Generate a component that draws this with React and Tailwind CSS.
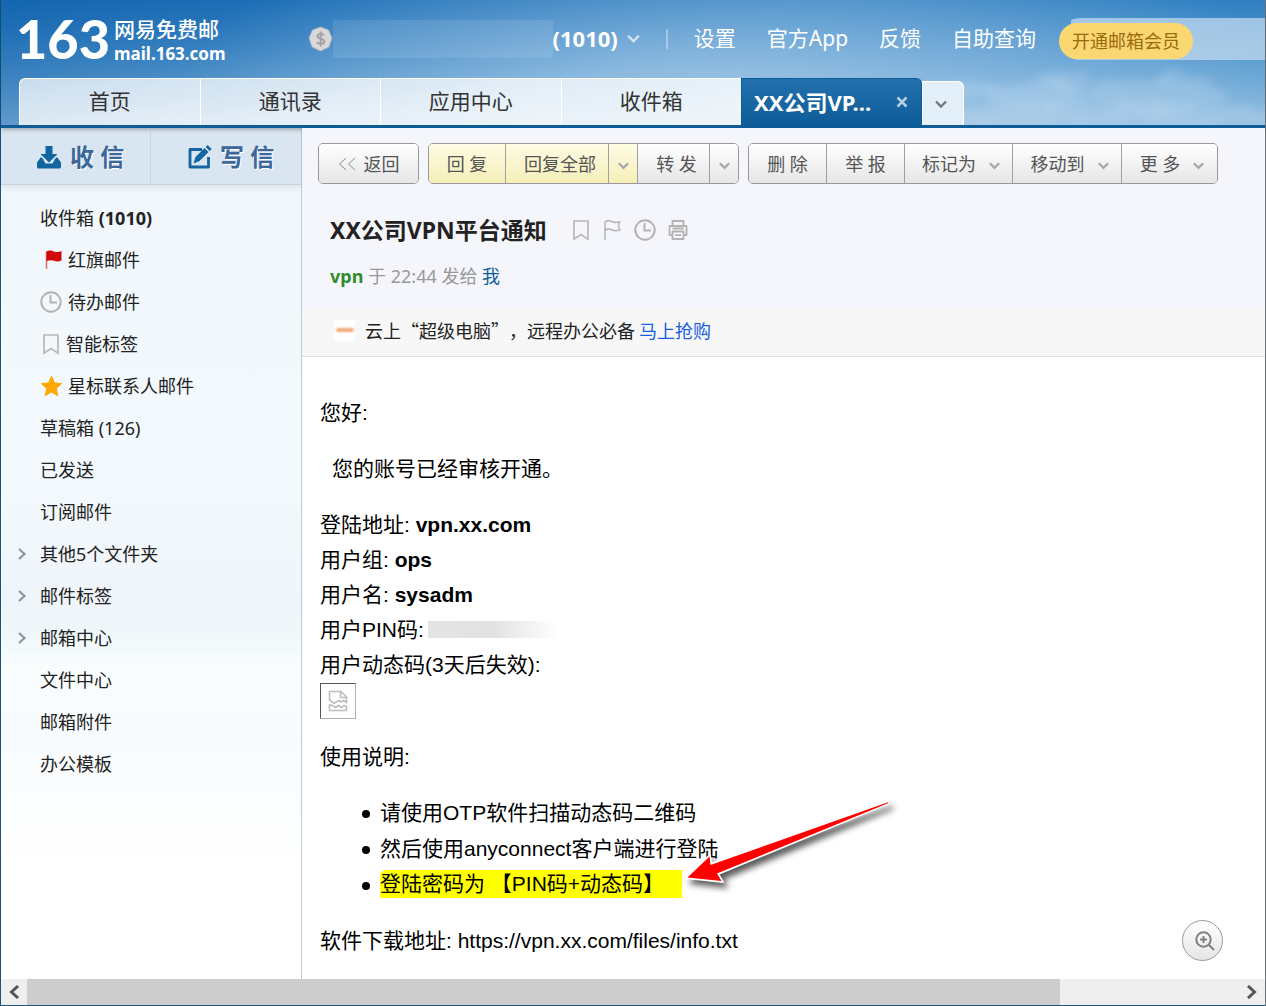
import React from "react";

const UI = "font-['Noto_Sans','Noto_Sans_CJK_SC',sans-serif]";

function Chevron({ className = "", w = 14, stroke = 2.4 }) {
  return (
    <svg width={w} height={w} viewBox="0 0 14 14" fill="none" stroke="currentColor" strokeWidth={stroke} className={className} aria-hidden="true">
      <path d="M2 4.5 7 9.5 12 4.5" />
    </svg>
  );
}

function ClockIcon() {
  return (
    <svg width="22" height="22" viewBox="0 0 22 22" fill="none" stroke="#b3b3b3" strokeWidth="2" aria-hidden="true">
      <circle cx="11" cy="11" r="9.7" />
      <path d="M10.5 4v7.5H17" />
    </svg>
  );
}

function BookmarkIcon() {
  return (
    <svg width="18" height="22" viewBox="0 0 18 22" fill="none" stroke="#b8b8b8" strokeWidth="1.7" aria-hidden="true">
      <path d="M2 2h14v18.2l-7-4.6-7 4.6z" />
    </svg>
  );
}

function FlagOutline() {
  return (
    <svg width="20" height="22" viewBox="0 0 20 22" fill="none" stroke="#b8b8b8" strokeWidth="1.6" strokeLinejoin="round" aria-hidden="true">
      <path d="M3 21V3.500C4.500 1.300 7.500 1.500 9.500 2.500s4.500 1.300 8.500.2c-1.500 2-1.500 3-1.500 4.200s.2 2.300 1.500 4.100c-3.500 1-6.500.8-8.500-.2S4.500 9.500 3 11.800" />
    </svg>
  );
}

function PrinterIcon() {
  return (
    <svg width="20" height="22" viewBox="0 0 20 22" fill="none" stroke="#b3b3b3" strokeWidth="1.8" strokeLinejoin="round" aria-hidden="true">
      <path d="M4.500 6.500V2h11v4.500M4.500 16H1.500V7h17v9h-3M4.500 12.500h11V20h-11zM4.500 9.500h11M7 16.200h6" />
    </svg>
  );
}

function RedFlag() {
  return (
    <svg width="24" height="22" viewBox="0 0 24 22" aria-hidden="true">
      <path d="M6.500 3v17" stroke="#e36a6a" strokeWidth="1.500" />
      <path d="M6.500 2.200c3-1.500 5.500-.5 7.500.2s4.500.8 7.500-.3v9.500c-3 1.200-5.500 1-7.500.2s-4.500-1-7.500.4z" fill="#d00a0a" />
    </svg>
  );
}

function StarIcon() {
  return (
    <svg width="23" height="22" viewBox="0 0 23 22" aria-hidden="true">
      <path d="M11.500 1.200l2.900 6.700 7.300.7-5.500 4.900 1.600 7.200-6.300-3.800-6.300 3.800 1.600-7.200-5.500-4.900 7.300-.7z" fill="#ffa800" stroke="#ffa800" strokeLinejoin="round" />
    </svg>
  );
}

function Logo() {
  return (
    <a href="#home" className="flex items-center gap-1 text-white">
      <span className="font-['Lato',sans-serif] text-[54px] leading-[54px] font-black">163</span>
      <span className="flex flex-col gap-0.5 pt-1">
        <span className="font-['Noto_Sans_CJK_SC',sans-serif] text-[21px] leading-6 font-medium">网易免费邮</span>
        <span className="text-[17px] leading-6 font-bold">mail.163.com</span>
      </span>
    </a>
  );
}

function Clouds() {
  return (
    <svg className="absolute right-0 bottom-0 h-[70px] w-[345px]" viewBox="0 0 345 70" preserveAspectRatio="none" aria-hidden="true">
      <defs>
        <filter id="soft" x="-20%" y="-50%" width="140%" height="200%">
          <feTurbulence type="fractalNoise" baseFrequency="0.03 0.06" numOctaves="4" seed="8" result="n" />
          <feDisplacementMap in="SourceGraphic" in2="n" scale="26" />
          <feGaussianBlur stdDeviation="4" />
        </filter>
      </defs>
      <g fill="#d5e8f7" filter="url(#soft)">
        <ellipse cx="45" cy="34" rx="34" ry="10" opacity=".22" />
        <ellipse cx="115" cy="40" rx="50" ry="14" opacity=".25" />
        <ellipse cx="150" cy="26" rx="24" ry="9" opacity=".2" />
        <ellipse cx="235" cy="40" rx="70" ry="15" opacity=".22" />
        <ellipse cx="265" cy="26" rx="26" ry="7" opacity=".2" />
        <ellipse cx="180" cy="62" rx="200" ry="14" opacity=".22" />
      </g>
    </svg>
  );
}

const topLinks = ["设置", "官方App", "反馈", "自助查询"];
const tabs = ["首页", "通讯录", "应用中心", "收件箱"];

function Header() {
  return (
    <header className="relative border-b-[3px] border-[#0d5c98] bg-[radial-gradient(ellipse_560px_190px_at_735px_95px,rgba(190,215,238,0.55),rgba(190,215,238,0)),linear-gradient(160deg,rgba(0,84,164,0.6),rgba(0,84,164,0)_50%),linear-gradient(to_bottom,#2f7fc2,#5e9fd2_50%,#93bfe1)] shadow-[0_2px_4px_rgba(0,0,0,0.25)]">
      <Clouds />
      <div className="relative flex h-[78px] items-center pl-[15px] text-[21px] text-white">
        <Logo />
        <svg width="25" height="26" viewBox="0 0 25 26" className="ml-[82px] shrink-0" aria-hidden="true">
          <path d="M12.500 1l8 3 3.500 8-3 9-8.500 4-8.500-4-3-9L4.500 4z" fill="#d9d9d9" stroke="#a9b3bb" />
          <path d="M16 9.500c-.8-2-6.500-2.200-6.500.8 0 3 6.800 2 6.800 5.200 0 3-6 3-7.300.5M12.700 5.500v15" fill="none" stroke="#a3a3a3" strokeWidth="2" />
        </svg>
        <span className="h-[38px] w-[220px] bg-white/10" />
        <button className="flex items-center gap-2 pb-0.5 text-[22px] font-bold">
          (1010)
          <Chevron className="text-white/75" w={15} stroke={2} />
        </button>
        <span className="ml-[25px] h-5 w-0.5 bg-white/35" />
        <nav className="ml-[26px] flex gap-[31px]">
          {topLinks.map((t) => (
            <a key={t} href="#top" className="whitespace-nowrap">{t}</a>
          ))}
        </nav>
        <div className="ml-[23px] flex h-[42px] flex-1 items-center rounded-l-full bg-[linear-gradient(to_right,transparent_12px,rgba(200,221,240,0.7)_12px)] pt-1">
          <button className="flex h-9 items-center rounded-full bg-[#fbd771] px-[13px] text-lg whitespace-nowrap text-[#9a6a10]">开通邮箱会员</button>
        </div>
      </div>
      <nav className="relative flex items-end pl-[18px] text-[21px] text-[#333]">
        <div className="grid w-[722px] grid-cols-4">
          {tabs.map((t, i) => (
            <button key={t} className={"h-[47px] border-t border-l border-white bg-[linear-gradient(170deg,rgba(255,255,255,0.72),rgba(255,255,255,0.82))] " + (i === 0 ? "rounded-tl-md" : "")}>
              {t}
            </button>
          ))}
        </div>
        <div className="flex h-[47px] w-[181px] items-center justify-between rounded-tr-md border border-b-0 border-[#0d5c98] bg-linear-to-b from-[#2370ac] to-[#0d5c98] px-3 text-[22px] font-bold text-white">
          <span>XX公司VP...</span>
          <button aria-label="关闭">
            <svg width="14" height="14" viewBox="0 0 14 14" stroke="#b5d0e6" strokeWidth="2.500" aria-hidden="true">
              <path d="M2.500 2.500l9 9M11.500 2.500l-9 9" />
            </svg>
          </button>
        </div>
        <button aria-label="更多标签" className="flex h-11 w-[42px] items-center justify-center rounded-tr-md border border-b-0 border-white bg-[#e4f0f9] pr-1 text-[#777]">
          <Chevron />
        </button>
      </nav>
    </header>
  );
}

const folders = [
  { t: "收件箱", n: "(1010)", bold: true },
  { t: "红旗邮件", icon: <RedFlag />, gap: "gap-1" },
  { t: "待办邮件", icon: <ClockIcon />, gap: "gap-1.5" },
  { t: "智能标签", icon: <BookmarkIcon />, gap: "gap-1.5 pl-0.5" },
  { t: "星标联系人邮件", icon: <StarIcon />, gap: "gap-[5px]" },
  { t: "草稿箱", n: "(126)" },
  { t: "已发送" },
  { t: "订阅邮件" },
  { t: "其他5个文件夹", arrow: true },
  { t: "邮件标签", arrow: true },
  { t: "邮箱中心", arrow: true },
  { t: "文件中心" },
  { t: "邮箱附件" },
  { t: "办公模板" },
];

function Sidebar() {
  return (
    <aside className="w-[301px] shrink-0 border-r border-[#bccdd8] bg-[linear-gradient(to_bottom,#f0f6fb,#f4f9fd_350px,#eff5fa_470px,#eff7fa_505px,#fafdfe_540px,#f8fbfd_610px,#ffffff_740px)]">
      <div className="grid h-[57px] grid-cols-2 border-b border-[#c3d3df] bg-[#d9e6f1] pt-0.5 text-2xl font-bold text-[#3b679a] shadow-[0_2px_8px_rgba(0,0,0,0.1)]">
        <button className="flex items-center gap-2 border-r border-[#c5d6e4] pl-[35px] [text-shadow:1px_1px_0_white]">
          <svg width="26" height="25" viewBox="0 0 26 25" fill="#1265a0" aria-hidden="true">
            <path d="M9.500 1h7v8h5L13 17.500 4.500 9h5z" />
            <path d="M5 12l3 3H7.500l2 3.500h7l2-3.500H18l3-3 4 5.500V22a1.500 1.500 0 0 1-1.500 1.500h-21A1.500 1.500 0 0 1 1 22v-4.500z" />
          </svg>
          收 信
        </button>
        <button className="flex items-center gap-2 pl-9 [text-shadow:1px_1px_0_white]">
          <svg width="25" height="25" viewBox="0 0 25 25" aria-hidden="true">
            <path d="M15 4.500H3V22h18.500V12" fill="none" stroke="#1265a0" strokeWidth="2.800" strokeLinejoin="round" />
            <path d="M6.500 18.500l2-6.500L17.500 3l4 4-9 9z" fill="#1265a0" />
            <path d="M18.700 1.900L20.600 0l4 4-1.900 1.900z" fill="#1265a0" />
          </svg>
          写 信
        </button>
      </div>
      <nav className="pt-3 text-lg leading-[42px] text-[#222]">
        <ul>
          {folders.map((f) => (
            <li key={f.t}>
              <a href="#folder" className="flex h-[42px] items-center">
                <span className="flex w-[39px] justify-end pr-3">
                  {f.arrow && (
                    <svg width="11" height="14" viewBox="0 0 11 14" fill="none" stroke="#8f959b" strokeWidth="2.200" aria-hidden="true">
                      <path d="M2 2l5.500 5L2 12" />
                    </svg>
                  )}
                </span>
                <span className={"flex items-center " + (f.gap || "")}>
                  {f.icon}
                  <span>
                    {f.t}
                    {f.n && <span className={f.bold ? "font-bold" : ""}> {f.n}</span>}
                  </span>
                </span>
              </a>
            </li>
          ))}
        </ul>
      </nav>
    </aside>
  );
}

const yellow = "bg-linear-to-b from-[#fdfbe3] to-[#f6efb9]";
const grey = "bg-linear-to-b from-white to-[#e6e6e6]";

function Tool({ children, w, tone = grey, caret, line = true, label }) {
  return (
    <button aria-label={label} className={"flex items-center justify-center gap-3 whitespace-nowrap " + w + " " + tone + (line ? " border-r border-[#a0a0a0]" : "")}>
      {children}
      {caret && <Chevron className="mt-1 shrink-0 text-[#a5a8ab]" w={13} />}
    </button>
  );
}

function Group({ children }) {
  return <div className="flex h-[41px] shrink-0 overflow-hidden rounded-[5px] border border-[#999]">{children}</div>;
}

function Toolbar() {
  return (
    <div className="flex gap-[9px] px-4 pt-[15px] text-lg text-[#555]">
      <Group>
        <Tool w="w-[99px]" line={false}>
          <svg width="18" height="14" viewBox="0 0 18 14" fill="none" stroke="#8a8a8a" aria-hidden="true">
            <path d="M8 1L1.500 7 8 13M17 1l-6.500 6 6.500 6" />
          </svg>
          <span className="-ml-1">返回</span>
        </Tool>
      </Group>
      <Group>
        <Tool w="w-[77px]" tone={yellow}>回 复</Tool>
        <Tool w="w-[103px] pl-1.5" tone={yellow}>回复全部</Tool>
        <Tool w="w-[29px]" tone={yellow} caret label="更多回复" />
        <Tool w="w-[72px] pl-1.5">转 发</Tool>
        <Tool w="w-[28px]" caret line={false} label="更多转发" />
      </Group>
      <Group>
        <Tool w="w-[78px]">删 除</Tool>
        <Tool w="w-[78px]">举 报</Tool>
        <Tool w="w-[108px] pl-1.5" caret>标记为</Tool>
        <Tool w="w-[109px] pl-1.5" caret>移动到</Tool>
        <Tool w="w-[95px] pl-1.5" caret line={false}>更 多</Tool>
      </Group>
    </div>
  );
}

function MessageHead() {
  return (
    <div className="bg-[#f5f6fb]">
      <Toolbar />
      <div className="flex items-center pt-[30px] pl-7">
        <h1 className="text-[23px] leading-8 font-bold text-[#222]">XX公司VPN平台通知</h1>
        <div className="ml-[25px] flex items-center gap-3">
          <button aria-label="标签"><BookmarkIcon /></button>
          <button aria-label="红旗"><FlagOutline /></button>
          <button aria-label="待办"><ClockIcon /></button>
          <button aria-label="打印"><PrinterIcon /></button>
        </div>
      </div>
      <p className="pt-4 pb-[18px] pl-7 text-lg leading-7 text-[#999]">
        <b className="text-[#328a2e]">vpn</b> 于 22:44 发给 <a href="#me" className="text-[#0d5c98]">我</a>
      </p>
      <div className="flex h-[49px] items-center border-b border-[#ddd] bg-[#f7f7f7] pb-1 pl-8 text-lg text-[#222]">
        <span className="flex size-[21px] items-center justify-center bg-white">
          <span className="h-1 w-[18px] rounded-full bg-[#f0a875] blur-[1px]" />
        </span>
        <p className="ml-2.5 font-['Noto_Sans_CJK_SC',sans-serif] [text-spacing-trim:space-all]" lang="zh-CN">
          云上“超级电脑”，远程办公必备 <a href="#buy" className="text-[#1a5fe0]">马上抢购</a>
        </p>
      </div>
    </div>
  );
}

function PointerArrow() {
  return (
    <svg width="216" height="96" viewBox="0 0 216 96" className="absolute bottom-0 left-full overflow-visible drop-shadow-[4px_5px_3px_rgba(0,0,0,0.65)]" aria-hidden="true">
      <path d="M4 76L28 53l1 8.500L206 0v1.500L36 72l5 8z" fill="#fff" stroke="#fff" strokeWidth="2" strokeLinejoin="round" />
      <path d="M5.500 75.500L27.500 54.500l1 8.500L206 .2v1L35 71.500l4.500 7.500z" fill="#ff0000" />
    </svg>
  );
}

function MessageBody() {
  return (
    <article className="flex-1 pt-[38px] pb-5 pl-[18px] font-['Liberation_Sans','Noto_Sans_CJK_SC',sans-serif] text-[21px] leading-[35px] text-black">
      <p>您好:</p>
      <p className="mt-[21px] pl-3">您的账号已经审核开通。</p>
      <div className="mt-[21px]">
        <p>登陆地址: <b>vpn.xx.com</b></p>
        <p>用户组: <b>ops</b></p>
        <p>用户名: <b>sysadm</b></p>
        <p className="flex items-center gap-1">
          用户PIN码:
          <span className="h-[17px] w-[130px] bg-linear-to-r from-[#e4e4e4] via-[#e2e2e2] to-white" />
        </p>
        <p>用户动态码(3天后失效):</p>
        <div role="img" aria-label="二维码" className="mt-px flex size-9 items-center justify-center border border-[#b0b0b0] border-t-[#555] border-l-[#555]">
          <svg width="20" height="22" viewBox="0 0 20 22" fill="none" stroke="#bdbdbd" strokeWidth="1.600" aria-hidden="true">
            <path d="M1.500 10.500V1.500H13L18.500 7v5.500l-3-2-2.500 1.500-2-1.500L6 13.200 1.500 10M12.500 2v5.500h6M1.500 15v5.500h17V16.500l-2.500-1-2.500 2-3-2-3 2-3-2z" />
          </svg>
        </div>
      </div>
      <p className="mt-5">使用说明:</p>
      <ul className="mt-[21px] flex flex-col gap-px pl-[60px]">
        {["请使用OTP软件扫描动态码二维码", "然后使用anyconnect客户端进行登陆"].map((t) => (
          <li key={t} className="relative">
            <Bullet />
            {t}
          </li>
        ))}
        <li className="relative flex h-[35px] items-center pb-px">
          <Bullet />
          <span className="relative h-7 w-[302px] rounded-tl-md bg-[#ffff00] leading-7 whitespace-nowrap">
            登陆密码为 【PIN码+动态码】
            <PointerArrow />
          </span>
        </li>
      </ul>
      <p className="mt-[21px]">软件下载地址: https://vpn.xx.com/files/info.txt</p>
    </article>
  );
}

function Bullet() {
  return <span className="absolute top-[15px] -left-[18px] size-2 rounded-full bg-black" />;
}

function ScrollBar() {
  return (
    <div className="flex h-[26px] bg-[#efefef] text-[#555]">
      <button aria-label="向左" className="flex w-[26px] items-center justify-center">
        <svg width="12" height="14" viewBox="0 0 12 14" fill="none" stroke="currentColor" strokeWidth="3" aria-hidden="true">
          <path d="M10 1L3.500 7 10 13" />
        </svg>
      </button>
      <div className="flex-1">
        <div className="h-full w-[85.2%] bg-[#cdcdcd]" />
      </div>
      <button aria-label="向右" className="flex w-[26px] items-center justify-center">
        <svg width="12" height="14" viewBox="0 0 12 14" fill="none" stroke="currentColor" strokeWidth="3" aria-hidden="true">
          <path d="M2 1l6.500 6L2 13" />
        </svg>
      </button>
    </div>
  );
}

export default function App() {
  return (
    <div className={"flex min-h-screen flex-col border-r border-b border-l border-r-[#707478] border-b-[#1d5a78] border-l-[#14567e] bg-white " + UI} lang="zh-CN">
      <Header />
      <div className="flex flex-1">
        <Sidebar />
        <main className="relative flex min-w-0 flex-1 flex-col">
          <MessageHead />
          <MessageBody />
          <button aria-label="放大" className="absolute right-[42px] bottom-[18px] flex size-[41px] items-center justify-center rounded-full border border-[#999] bg-linear-to-b from-white to-[#e6e6e6]">
            <svg width="20" height="20" viewBox="0 0 20 20" fill="none" stroke="#808080" strokeWidth="2" className="ml-1" aria-hidden="true">
              <circle cx="8.500" cy="8.500" r="7.200" />
              <path d="M8.500 5v7M5 8.500h7M14 14l5 5" />
            </svg>
          </button>
        </main>
      </div>
      <ScrollBar />
    </div>
  );
}
